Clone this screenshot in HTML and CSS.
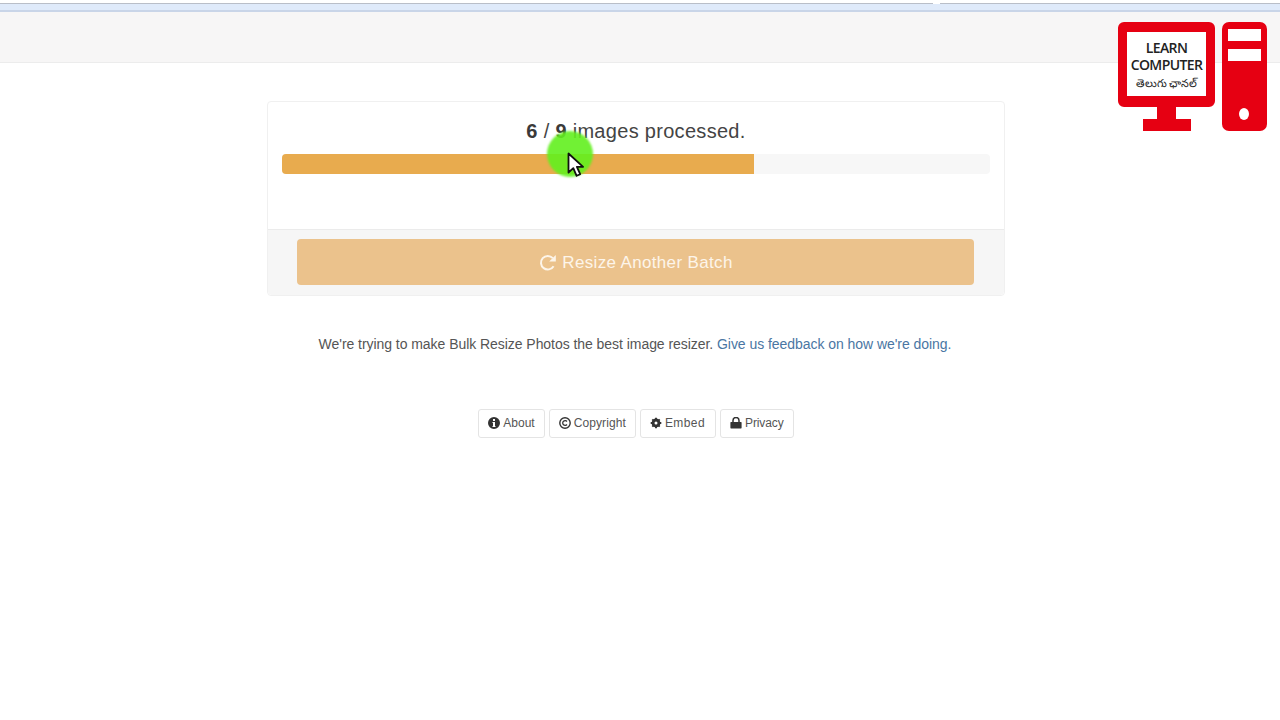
FILE: index.html
```html
<!DOCTYPE html>
<html lang="en">
<head>
<meta charset="utf-8">
<title>Bulk Resize Photos</title>
<link rel="stylesheet" href="styles.css">
</head>
<body>
<div class="chrome">
  <div class="tabs"><div class="tab tab-a"></div><div class="tab tab-b"></div></div>
  <div class="toolbar"></div>
</div>
<header class="navbar"></header>
<main class="content">
  <section class="panel">
    <div class="panel-body">
      <p class="status"><b>6</b> / <b>9</b> images processed.</p>
      <div class="progress"><div class="bar" style="width:66.67%"></div></div>
    </div>
    <div class="panel-footer">
      <button class="batch" type="button">
        <svg class="refresh" viewBox="0 0 20 20"><path d="M15.6 13.2A6.8 6.8 0 1 1 14.8 5.1" fill="none" stroke="currentColor" stroke-width="2"/><path d="M17.8 2v6.6h-6.6z" fill="currentColor"/></svg>
        Resize Another Batch
      </button>
    </div>
  </section>
  <p class="feedback">We're trying to make Bulk Resize Photos the best image resizer. <a href="#">Give us feedback on how we're doing.</a></p>
  <nav class="links">
    <a class="link" href="#"><svg class="ico" viewBox="0 0 12 12"><path fill-rule="evenodd" d="M6 0a6 6 0 1 1 0 12A6 6 0 0 1 6 0zM5 2v2h2V2zM4.5 5v1H5v3H4.500v1h3V9H7V5z"/></svg>About</a>
    <a class="link link-copy" href="#"><svg class="ico" viewBox="0 0 12 12"><circle cx="6" cy="6" r="5.2" fill="none" stroke="currentColor" stroke-width="1.4"/><path d="M8 4.500A2.400 2.400 0 1 0 8 7.500" fill="none" stroke="currentColor" stroke-width="1.300"/></svg>Copyright</a>
    <a class="link link-embed" href="#"><svg class="ico" viewBox="0 0 12 12"><circle cx="6" cy="6" r="3.300" fill="none" stroke="currentColor" stroke-width="2.200"/><path d="M6 6 6 .7M6 6l0 5.300M6 6H.7M6 6h5.300M6 6 2.300 2.300M6 6l3.700 3.700M6 6 2.300 9.700M6 6l3.700-3.700" stroke="currentColor" stroke-width="1.900"/><circle cx="6" cy="6" r="1.500" fill="#fff"/></svg>Embed</a>
    <a class="link link-privacy" href="#"><svg class="ico" viewBox="0 0 12 12"><path d="M1 5h10a.6.6 0 0 1 .6.6v5.200a.6.6 0 0 1-.6.6H1a.6.6 0 0 1-.6-.6V5.600A.6.6 0 0 1 1 5z"/><path d="M3 5.500V3.500a3 3 0 0 1 6 0v2" fill="none" stroke="currentColor" stroke-width="1.500"/></svg>Privacy</a>
  </nav>
</main>
<div class="logo">
  <div class="monitor">
    <div class="screen">
      <span class="l1">LEARN</span>
      <span class="l2">COMPUTER</span>
      <span class="l3">తెలుగు ఛానల్</span>
    </div>
    <div class="neck"></div>
    <div class="foot"></div>
  </div>
  <div class="tower">
    <div class="slot"></div>
    <div class="slot"></div>
    <div class="led"></div>
  </div>
</div>
<div class="cursor-spot"></div>
<svg class="cursor" viewBox="0 0 18 26"><path d="M1.500 1.500v19l4.800-4.300 3.300 7.600 3.600-1.600-3.300-7.400h6.200z" fill="#fff" stroke="#111" stroke-width="1.800" stroke-linejoin="round"/></svg>
</body>
</html>
```
FILE: styles.css
```css
* { box-sizing: border-box; }
html, body { margin: 0; height: 100%; overflow: hidden; }
body { background: #fff; color: #333; font-family: "Liberation Sans", Arial, sans-serif; }

.chrome { height: 12px; }
.tabs { height: 4px; display: flex; gap: 7px; background: #fff; }
.tab { height: 4px; border-bottom: 1px solid #b9bec8; }
.tab-a { width: 933px; }
.tab-b { flex: 1; }
.toolbar { height: 8px; background: #dfeafa; border-bottom: 2px solid #c9d5e8; }

.navbar { height: 51px; background: #f7f6f6; border-bottom: 1px solid #ececec; }

.content { display: flex; flex-direction: column; align-items: center; padding: 38px 8px 0 0; }

.panel { width: 738px; height: 195px; border: 1px solid #f0f0f0; border-radius: 4px; display: flex; flex-direction: column; }
.panel-body { height: 127px; padding: 17px 14px 0; }
.status { margin: 0 0 11px; height: 24px; text-align: center; font-size: 20px; line-height: 24px; letter-spacing: .3px; color: #444; }
.status b { color: #3a3a3a; }
.progress { height: 20px; background: #f7f7f7; border-radius: 4px; overflow: hidden; }
.bar { height: 100%; background: #e8ab4e; }
.panel-footer { flex: 1; background: #f6f6f6; border-top: 1px solid #ebebeb; padding: 9px 30px 0 29px; border-radius: 0 0 4px 4px; }
.batch { display: flex; align-items: center; justify-content: center; gap: 4px; width: 100%; height: 46px; border: 0; border-radius: 4px; background: #ebc28c; color: #fdf5ea; font-family: inherit; font-size: 17px; letter-spacing: .35px; padding: 1px 0 0; }
.refresh { width: 20px; height: 20px; }

.feedback { margin: 39px 0 0 -2px; font-size: 14px; line-height: 18px; letter-spacing: -.05px; color: #555; }
.feedback a { color: #4a76a3; text-decoration: none; }

.links { display: flex; gap: 4px; margin-top: 56px; }
.link { display: flex; align-items: center; gap: 3px; height: 29px; padding: 0 9px 1px; border: 1px solid #e4e4e4; border-radius: 3px; background: #fff; color: #555; font-size: 12px; text-decoration: none; }
.link-copy { letter-spacing: .1px; }
.link-embed { letter-spacing: .4px; padding-right: 10px; }
.link-privacy { letter-spacing: -.1px; }
.ico { width: 12px; height: 12px; fill: #333; color: #333; }

.logo { position: absolute; left: 1118px; top: 22px; display: flex; gap: 7px; }
.monitor { width: 97px; height: 109px; display: flex; flex-direction: column; align-items: center; }
.screen { width: 97px; height: 85px; background: #fff; border: 9px solid #e60012; border-top-width: 10px; border-bottom-width: 11px; border-radius: 6px; padding-top: 7px; display: flex; flex-direction: column; align-items: center; font-family: "Open Sans", "Noto Sans", sans-serif; font-weight: 600; color: #222; }
.l1, .l2 { font-size: 14px; line-height: 17px; letter-spacing: -.6px; }
.l3 { font-size: 11px; line-height: 20px; font-weight: 400; white-space: nowrap; }
.neck { width: 19px; height: 12px; background: #e60012; }
.foot { width: 48px; height: 12px; background: #e60012; }
.tower { width: 45px; height: 109px; background: #e60012; border-radius: 7px; padding: 7px 6px 0; display: flex; flex-direction: column; gap: 8px; position: relative; }
.slot { height: 12px; background: #fff; }
.led { position: absolute; left: 17px; top: 86px; width: 10px; height: 12px; border-radius: 50%; background: #fff; }

.cursor-spot { position: absolute; left: 547px; top: 131px; width: 46px; height: 46px; border-radius: 50%; background: rgba(98,240,30,.9); filter: blur(1px); }
.cursor { position: absolute; left: 567px; top: 152px; width: 18px; height: 26px; }
```
